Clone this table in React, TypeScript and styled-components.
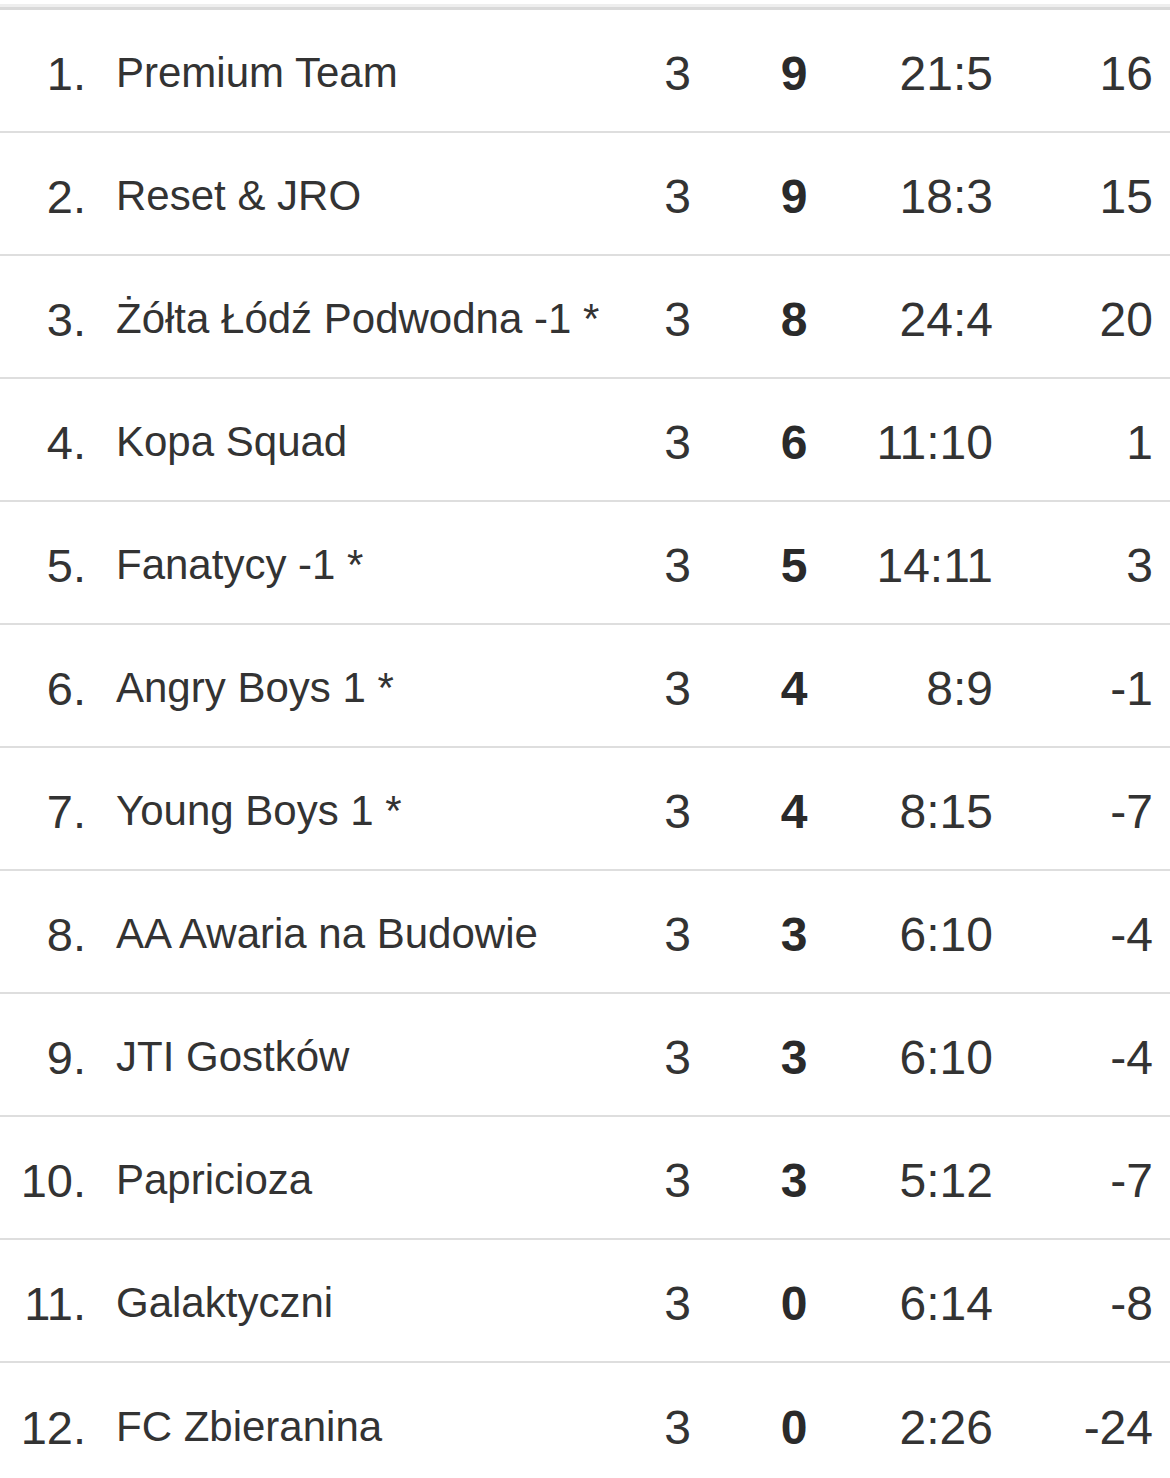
import React from "react";
import styled, { createGlobalStyle } from "styled-components";

const Global = createGlobalStyle`
  html, body {
    margin: 0;
    padding: 0;
    background: #ffffff;
  }
  body {
    font-family: "Liberation Sans", Arial, sans-serif;
    color: #333333;
  }
`;

const Table = styled.div`
  padding-top: 7px;
  display: flex;
  flex-direction: column;
`;

const List = styled.div`
  border-top: 3px solid #d9d9d9;
  box-shadow: 0 -3px 0 #eeeeee;
  display: flex;
  flex-direction: column;
`;

const Row = styled.div<{ $last?: boolean }>`
  display: grid;
  grid-template-columns: 86px 1fr 75px 158px 120px 160px;
  align-items: center;
  box-sizing: border-box;
  height: 123px;
  padding-top: 5px;
  padding-right: 17px;
  border-bottom: ${(p) => (p.$last ? "none" : "2px solid #dedede")};
`;

const Rank = styled.div`
  text-align: right;
  font-size: 47px;
  color: #333;
`;

const Team = styled.div`
  padding-left: 30px;
  font-size: 42px;
  color: #333;
  white-space: nowrap;
`;

const Num = styled.div<{ $align: "center" | "right"; $bold?: boolean }>`
  font-size: 48px;
  text-align: ${(p) => p.$align};
  font-weight: ${(p) => (p.$bold ? 700 : 400)};
  color: ${(p) => (p.$bold ? "#2a2a2a" : "#333")};
`;

type Entry = { team: string; played: number; pts: number; goals: string; diff: string };

const data: Entry[] = [
  { team: "Premium Team", played: 3, pts: 9, goals: "21:5", diff: "16" },
  { team: "Reset & JRO", played: 3, pts: 9, goals: "18:3", diff: "15" },
  { team: "Żółta Łódź Podwodna -1 *", played: 3, pts: 8, goals: "24:4", diff: "20" },
  { team: "Kopa Squad", played: 3, pts: 6, goals: "11:10", diff: "1" },
  { team: "Fanatycy -1 *", played: 3, pts: 5, goals: "14:11", diff: "3" },
  { team: "Angry Boys 1 *", played: 3, pts: 4, goals: "8:9", diff: "-1" },
  { team: "Young Boys 1 *", played: 3, pts: 4, goals: "8:15", diff: "-7" },
  { team: "AA Awaria na Budowie", played: 3, pts: 3, goals: "6:10", diff: "-4" },
  { team: "JTI Gostków", played: 3, pts: 3, goals: "6:10", diff: "-4" },
  { team: "Papricioza", played: 3, pts: 3, goals: "5:12", diff: "-7" },
  { team: "Galaktyczni", played: 3, pts: 0, goals: "6:14", diff: "-8" },
  { team: "FC Zbieranina", played: 3, pts: 0, goals: "2:26", diff: "-24" },
];

export default function App() {
  return (
    <>
      <Global />
      <Table>
        <List>
          {data.map((e, i) => (
            <Row key={i} $last={i === data.length - 1}>
              <Rank>{i + 1}.</Rank>
              <Team>{e.team}</Team>
              <Num $align="center">{e.played}</Num>
              <Num $align="center" $bold>
                {e.pts}
              </Num>
              <Num $align="right">{e.goals}</Num>
              <Num $align="right">{e.diff}</Num>
            </Row>
          ))}
        </List>
      </Table>
    </>
  );
}
